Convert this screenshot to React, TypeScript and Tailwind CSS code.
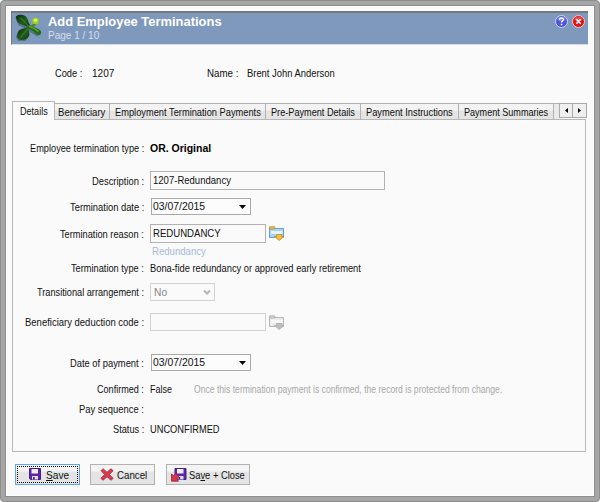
import { useLayoutEffect, useRef, useState, type ReactNode } from "react";
import clsx from "clsx";

// Single line of text squeezed horizontally into a given width
function Fit({ w, children, className }: { w: number; children: ReactNode; className?: string }) {
  const ref = useRef<HTMLSpanElement>(null);
  const [scale, setScale] = useState(1);

  useLayoutEffect(() => {
    if (ref.current) setScale(w / ref.current.offsetWidth);
  }, [w]);

  return (
    <span className={clsx("inline-flex shrink-0 whitespace-nowrap", className)} style={{ width: w }}>
      <span ref={ref} className="inline-block shrink-0 origin-left" style={{ transform: `scaleX(${scale})` }}>
        {children}
      </span>
    </span>
  );
}

function Logo() {
  return (
    <svg width="28" height="30" viewBox="0 0 28 30" className="shrink-0">
      <defs>
        <linearGradient id="leaf" x1="0" y1="0" x2="1" y2="1">
          <stop offset="0" stopColor="#0b2a12" />
          <stop offset="0.55" stopColor="#1f5f1a" />
          <stop offset="1" stopColor="#0f3411" />
        </linearGradient>
      </defs>
      {/* soft shadow under the leaves */}
      <g fill="#34506b" opacity="0.55" transform="translate(-0.8 1)">
        <path d="M1 3C4 1 9 2 11.500 4l3 6.500L24 16l1.500 4-2.500 2.500-9-5.500.5 5.500-3 4.500H4L1.500 23 4 17.500l7-3L4 11z" />
      </g>
      <path d="M1 3.500C2.500 1 8.500 1.500 11 3.500c2 1.800 2 5.500 4 8.500l-2.500 2C9.500 11.500 5.500 12 3 9.500 1.500 7.500 1 5.500 1 3.500z" fill="url(#leaf)" />
      <path d="M13.500 14.500c-.5 3 2 5.500.5 8.500-1.500 3.500-7 5-10 3.500C1.500 25 2 20 4 17.500c2-2.300 6.500-2 9.500-3z" fill="url(#leaf)" />
      <path d="M12 11.500c4 1.500 8 2.500 11.500 4.500 2.500 1.500 3.500 3.500 2 5.500-1.500 1.500-4 .5-5.500-1.500-2-2.500-5-4-8.500-4.500z" fill="#246c1a" />
      <path d="M13.500 13c3 0 4.500-1.500 5.500-3l2 1c-1 2-2.500 3.500-5 4z" fill="#3b8a1f" />
      <path d="M5 5c3 1.500 6 5 8 8M6 24c1.500-3 4.500-5.500 7-8.500" stroke="#347d1f" strokeWidth="1.200" fill="none" />
      <path d="M14 13.500c4 1 7 2.500 9.500 5" stroke="#6fae32" strokeWidth="1.100" fill="none" />
      <circle cx="20.500" cy="8" r="3.200" fill="#9bd11d" />
      <circle cx="20.500" cy="7.300" r="1.800" fill="#dcf259" />
    </svg>
  );
}

function HelpIcon() {
  return (
    <svg width="13" height="13" viewBox="0 0 13 13">
      <circle cx="6.500" cy="6.500" r="6" fill="#4d56d8" stroke="#cbd4f5" />
      <ellipse cx="6.500" cy="4" rx="4" ry="2.300" fill="#7c86ea" />
      <path d="M4.600 4.800c0-2.400 3.800-2.400 3.800-.2 0 1.400-1.900 1.300-1.900 2.900" stroke="#fff" strokeWidth="1.400" fill="none" />
      <rect x="5.800" y="8.700" width="1.500" height="1.500" fill="#fff" />
    </svg>
  );
}

function CloseIcon() {
  return (
    <svg width="13" height="13" viewBox="0 0 13 13">
      <circle cx="6.500" cy="6.500" r="6" fill="#e01212" stroke="#eec5cd" />
      <ellipse cx="6.500" cy="4" rx="4" ry="2.300" fill="#ee4747" />
      <path d="M4.300 4.300l4.400 4.400M8.700 4.300L4.300 8.700" stroke="#fff" strokeWidth="1.600" />
    </svg>
  );
}

function FolderIcon({ disabled }: { disabled?: boolean }) {
  const line = disabled ? "#b5b5b5" : "#6a9fd6";
  const body = disabled ? "#ebebeb" : "#a9d4f7";
  const tab = disabled ? "#d0d0d0" : "#f2c04b";
  const arrow = disabled ? "#bdbdbd" : "#f5bd35";
  const edge = disabled ? "#adadad" : "#b98b31";
  return (
    <svg width="16" height="15" viewBox="0 0 16 15" className="ml-[3px] shrink-0">
      <path d="M.5 11.500V2.500h14v9z" fill={body} stroke={line} />
      <path d="M2 5h11.500v3H2z" fill={disabled ? "#f8f8f8" : "#e4f4ff"} />
      <path d="M.5 3V.8h5.300V3z" fill={tab} stroke={edge} strokeWidth="0.800" />
      <path d="M7.500 8.500h5.500v2h2L10.200 14.500 5.500 10.500h2z" fill={arrow} stroke={edge} strokeWidth="0.800" />
    </svg>
  );
}

function Floppy() {
  return (
    <>
      <path d="M.5.5h11v11h-10l-1-1z" fill="#5b25a5" stroke="#43208a" />
      <path d="M2.500 1h6.500v4.500H2.500z" fill="#f1ecfa" />
      <path d="M3 8h6v3.500H3z" fill="#e3dcef" />
      <path d="M4 9h1.700v2.500H4z" fill="#43208a" />
    </>
  );
}

function SaveIcon() {
  return (
    <svg width="12" height="12" viewBox="0 0 12 12" className="-mt-px">
      <Floppy />
    </svg>
  );
}

function CancelIcon() {
  return (
    <svg width="14" height="13" viewBox="0 0 14 13">
      <path d="M1 2.700L3 .7l4 3.500L11 .7l2.200 2L9.300 6.500l3.900 3.800-2.200 2-4-3.500-4 3.500-2.200-2 3.900-3.800z" fill="#d93a50" stroke="#9e2c40" strokeWidth="0.800" />
    </svg>
  );
}

function SaveCloseIcon() {
  return (
    <svg width="16" height="14" viewBox="0 0 16 14">
      <g transform="translate(3.500 0)">
        <Floppy />
      </g>
      <path d="M.5 6l2 1.500L4.800 5.500l3.200 3-2.200 2.200 1.700 2.500H.5z" fill="#dc3349" stroke="#9c2239" strokeWidth="0.800" />
    </svg>
  );
}

function Row({ label, w, className, children }: { label: string; w: number; className: string; children?: ReactNode }) {
  return (
    <div className={clsx("flex items-center", className)}>
      <div className="mr-[6px] flex w-[131px] shrink-0 justify-end">
        <Fit w={w}>{label} :</Fit>
      </div>
      {children}
    </div>
  );
}

function DateBox({ value }: { value: string }) {
  return (
    <div className="ml-px flex h-[17px] w-[100px] shrink-0 items-center justify-between border border-[#a9a9a9] bg-[#fcfcfc] pr-[4px] pl-px">
      <Fit w={52} className="pb-[2px]">{value}</Fit>
      <svg width="7" height="4" viewBox="0 0 7 4">
        <path d="M0 0h7L3.500 4z" fill="#000" />
      </svg>
    </div>
  );
}

const tabs = [
  { title: "Beneficiary", cell: "w-[55px] pl-[3px]", w: 47 },
  { title: "Employment Termination Payments", cell: "w-[156px] pl-[5px]", w: 146 },
  { title: "Pre-Payment Details", cell: "w-[95px] pl-[5px]", w: 84 },
  { title: "Payment Instructions", cell: "w-[98px] pl-[5px]", w: 87 },
  { title: "Payment Summaries", cell: "w-[95px] pl-[5px]", w: 84 },
];

export default function App() {
  return (
    <div className="h-[502px] w-[600px] rounded-[4px] border border-[#8d8d8d] bg-[#a6a6a6] p-[4px] font-['Liberation_Sans',Arial,sans-serif] text-[11px] leading-[14px] text-[#111]">
      <div className="flex h-full flex-col border border-[#8d8d8d] bg-[#fafafa] px-[5px] pt-[5px] shadow-[inset_0_0_0_1px_#fff]">
        {/* Title bar */}
        <header className="flex h-[34px] w-[577px] shrink-0 border-t-2 border-b border-l border-t-[#75787e] border-b-[#d9dde3] border-l-[#75787e] bg-[#7f99bd] pl-[3px]">
          <Logo />
          <div className="ml-[5px] flex flex-col pt-px">
            <Fit w={174} className="text-[13px] leading-[15px] font-bold text-white">Add Employee Terminations</Fit>
            <Fit w={51} className="leading-[13px] text-[#d3deef]">Page 1 / 10</Fit>
          </div>
          <div className="mt-[2px] ml-auto flex gap-[4px] pr-[3px]">
            <HelpIcon />
            <CloseIcon />
          </div>
        </header>

        {/* Record summary */}
        <div className="mt-[20px] ml-[44px] flex h-[16px] shrink-0 items-center">
          <Fit w={27}>Code :</Fit>
          <Fit w={22} className="ml-[10px]">1207</Fit>
          <Fit w={31} className="ml-[93px]">Name :</Fit>
          <Fit w={88} className="ml-[9px]">Brent John Anderson</Fit>
        </div>

        {/* Tab strip */}
        <div className="mt-[20px] ml-px flex h-[18px] shrink-0 items-end">
          <div className="z-10 -mb-px flex h-[19px] w-[43px] shrink-0 items-center border border-b-0 border-[#b7b7b7] bg-[#fafafa] pb-px pl-[7px]">
            <Fit w={28}>Details</Fit>
          </div>
          {tabs.map((t) => (
            <div
              key={t.title}
              className={clsx("flex h-[16px] shrink-0 items-center border-t border-r border-[#b2b2b2] bg-linear-to-b from-[#f3f3f3] from-40% to-[#e4e4e4] to-50% pt-px", t.cell)}
            >
              <Fit w={t.w}>{t.title}</Fit>
            </div>
          ))}
          <div className="h-[16px] w-[5px] border-t border-[#b2b2b2] bg-[#eaeaea]" />
          <div className="mb-px flex h-[15px] w-[28px] border border-[#a9a9a9] bg-[#efefef]">
            <div className="flex w-[13px] items-center justify-center border-r border-[#a9a9a9]">
              <svg width="3" height="5" viewBox="0 0 3 5"><path d="M3 0v5L0 2.500z" /></svg>
            </div>
            <div className="flex flex-1 items-center justify-center">
              <svg width="3" height="5" viewBox="0 0 3 5"><path d="M0 0v5l3-2.500z" /></svg>
            </div>
          </div>
        </div>

        {/* Details page */}
        <main className="ml-px h-[333px] w-[574px] shrink-0 border border-[#b7b7b7] pt-[18px]">
          <Row label="Employee termination type" w={114} className="h-[20px]">
            <Fit w={61} className="font-bold text-black">OR. Original</Fit>
          </Row>
          <Row label="Description" w={52} className="mt-[13px] h-[19px]">
            <div className="flex h-[19px] w-[235px] items-center border border-[#b2b2b2] pb-[2px] pl-[2px]">
              <Fit w={78}>1207-Redundancy</Fit>
            </div>
          </Row>
          <Row label="Termination date" w={74} className="mt-[8px] h-[17px]">
            <DateBox value="03/07/2015" />
          </Row>
          <Row label="Termination reason" w={84} className="mt-[9px] h-[19px]">
            <div className="flex h-[19px] w-[116px] items-center border border-[#b2b2b2] pb-[2px] pl-[2px]">
              <Fit w={68}>REDUNDANCY</Fit>
            </div>
            <FolderIcon />
          </Row>
          <div className="flex h-[16px] items-center pl-[139px] text-[#a6b9d6]">
            <Fit w={54}>Redundancy</Fit>
          </div>
          <Row label="Termination type" w={73} className="h-[18px]">
            <Fit w={211}>Bona-fide redundancy or approved early retirement</Fit>
          </Row>
          <Row label="Transitional arrangement" w={107} className="mt-[6px] h-[18px]">
            <div className="flex h-[18px] w-[65px] items-center justify-between border border-[#d2d2d2] pr-[3px] pl-[3px] text-[#858585]">
              <Fit w={13}>No</Fit>
              <svg width="8" height="7" viewBox="0 0 8 7">
                <path d="M1 1.500l3 3 3-3" stroke="#b5b5b5" strokeWidth="2" fill="none" />
              </svg>
            </div>
          </Row>
          <Row label="Beneficiary deduction code" w={119} className="mt-[12px] h-[18px]">
            <div className="h-[18px] w-[116px] border border-[#d2d2d2]" />
            <FolderIcon disabled />
          </Row>
          <Row label="Date of payment" w={74} className="mt-[23px] h-[17px]">
            <DateBox value="03/07/2015" />
          </Row>
          <Row label="Confirmed" w={47} className="mt-[9px] h-[18px]">
            <Fit w={22}>False</Fit>
            <Fit w={308} className="ml-[22px] text-[#a8a8a8]">
              Once this termination payment is confirmed, the record is protected from change.
            </Fit>
          </Row>
          <Row label="Pay sequence" w={65} className="mt-[2px] h-[18px]" />
          <Row label="Status" w={31} className="mt-[2px] h-[18px]">
            <Fit w={70}>UNCONFIRMED</Fit>
          </Row>
        </main>

        {/* Actions */}
        <footer className="mt-[12px] ml-[4px] flex h-[21px] shrink-0">
          <button className="h-[21px] w-[65px] border border-[#5fa6e8] bg-linear-to-b from-[#f4f4f4] from-30% to-[#e4e4e4] to-40% p-px">
            <span className="flex h-full items-center border border-dotted border-black pl-[11px]">
              <SaveIcon />
              <Fit w={23} className="ml-[5px]"><u>S</u>ave</Fit>
            </span>
          </button>
          <button className="ml-[10px] flex h-[21px] w-[65px] items-center border border-[#b2b2b2] bg-linear-to-b from-[#f4f4f4] from-30% to-[#e4e4e4] to-40% pl-[9px]">
            <CancelIcon />
            <Fit w={30} className="ml-[3px]">Cancel</Fit>
          </button>
          <button className="ml-[11px] flex h-[21px] w-[84px] items-center border border-[#b2b2b2] bg-linear-to-b from-[#f4f4f4] from-30% to-[#e4e4e4] to-40% pl-[4px]">
            <SaveCloseIcon />
            <Fit w={56} className="ml-[2px]">Sa<u>v</u>e + Close</Fit>
          </button>
        </footer>
      </div>
    </div>
  );
}
